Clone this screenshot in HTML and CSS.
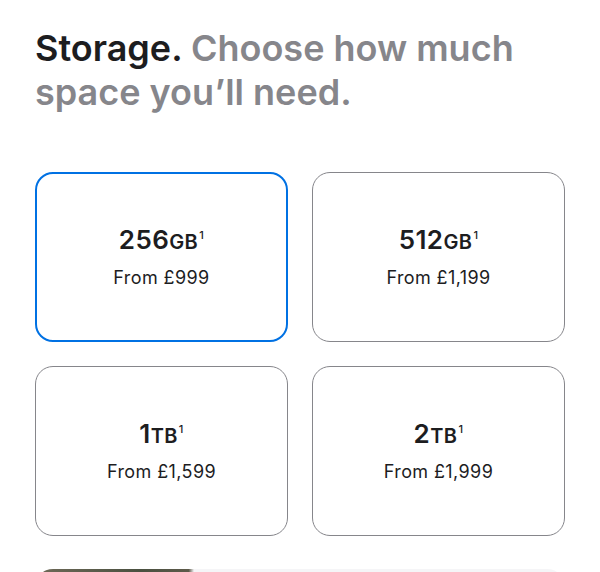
FILE: index.html
```html
<!DOCTYPE html>
<html lang="en">
<head>
<meta charset="utf-8">
<title>Storage</title>
<link rel="stylesheet" href="styles.css">
</head>
<body>
<main class="page">
  <h2 class="title"><span class="title-strong">Storage.</span> <span class="title-soft">Choose how much space you’ll need.</span></h2>
  <div class="grid">
    <div class="card selected">
      <div class="size">256<span class="unit">GB</span><sup class="note">1</sup></div>
      <div class="price">From £999</div>
    </div>
    <div class="card">
      <div class="size">512<span class="unit">GB</span><sup class="note">1</sup></div>
      <div class="price">From £1,199</div>
    </div>
    <div class="card">
      <div class="size">1<span class="unit">TB</span><sup class="note">1</sup></div>
      <div class="price">From £1,599</div>
    </div>
    <div class="card">
      <div class="size">2<span class="unit">TB</span><sup class="note">1</sup></div>
      <div class="price">From £1,999</div>
    </div>
  </div>
  <div class="next"></div>
</main>
</body>
</html>
```
FILE: styles.css
```css
html, body {
  margin: 0;
  padding: 0;
  background: #ffffff;
}
body {
  font-family: Inter, "Liberation Sans", Arial, sans-serif;
  color: #1d1d1f;
}
.page {
  padding: 26px 35px 0 35px;
  height: 572px;
  box-sizing: border-box;
  overflow: hidden;
}
.title {
  margin: 0;
  font-size: 36px;
  line-height: 44px;
  font-weight: 600;
  letter-spacing: 0;
  width: 510px;
}
.title-strong {
  color: #1d1d1f;
}
.title-soft {
  color: #86868b;
}
.grid {
  margin-top: 58px;
  display: grid;
  grid-template-columns: 1fr 1fr;
  gap: 24px;
}
.card {
  height: 170px;
  box-sizing: border-box;
  border: 1px solid #86868b;
  border-radius: 18px;
  display: flex;
  flex-direction: column;
  align-items: center;
  justify-content: center;
}
.card.selected {
  border: 2px solid #0071e3;
}
.size {
  font-size: 26px;
  line-height: 30px;
  font-weight: 600;
  letter-spacing: 0.4px;
  color: #1d1d1f;
}
.unit {
  font-size: 20px;
}
.note {
  font-size: 11px;
  font-weight: 500;
  vertical-align: 0;
  position: relative;
  top: -10px;
  margin-left: 1px;
}
.price {
  margin-top: 7px;
  font-size: 18px;
  line-height: 22px;
  font-weight: 400;
  letter-spacing: 0.4px;
  color: #1d1d1f;
}
.next {
  margin-top: 33px;
  height: 40px;
  border-radius: 18px;
  background: linear-gradient(90deg, #6f6a58 0%, #4a5040 20%, #5d5a4a 29%, #f5f5f7 30%, #f5f5f7 100%);
}
```
